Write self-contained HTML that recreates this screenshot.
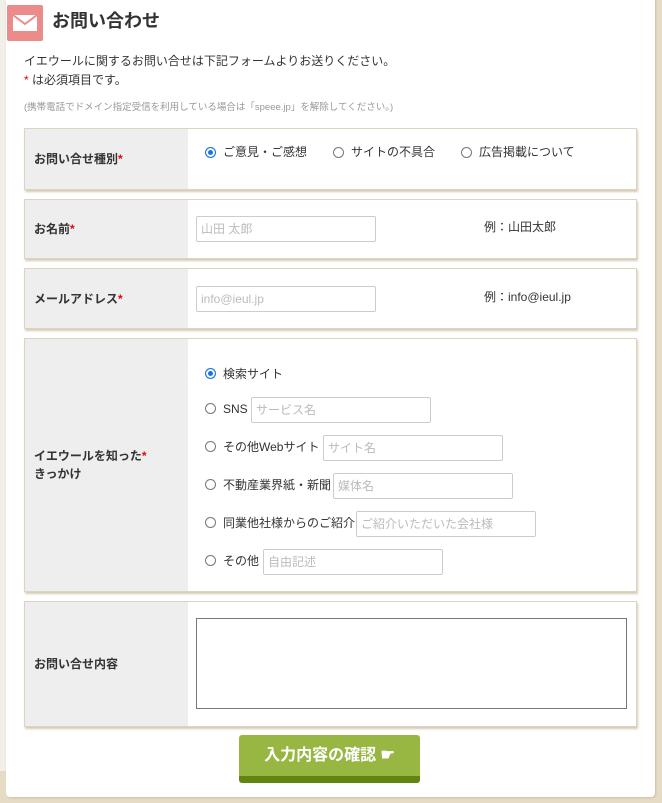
<!DOCTYPE html>
<html><head><meta charset="utf-8"><style>
*{box-sizing:border-box;margin:0;padding:0}
body{width:662px;height:803px;position:relative;overflow:hidden;background:#fff;font-family:"Liberation Sans","Noto Sans CJK JP",sans-serif;color:#333;font-size:12px}
.abs{position:absolute}
.bgb{left:0;top:771px;width:662px;height:32px;background:#e6dcc6}
.bgr{left:655px;top:0;width:7px;height:803px;background:#e6dcc6}
.bgl{left:0;top:0;width:6px;height:771px;background:#f2efe9}
.card{left:6px;top:-10px;width:649px;height:807px;background:#fff;border-radius:4px;box-shadow:1px 1px 2px #cbbfa8}
.row{position:absolute;left:24px;width:613px;background:#fff;border:1px solid #ddd3c2;box-shadow:1px 2px 2px #d6cbb6}
.lab{position:absolute;left:0;top:0;bottom:0;width:163px;background:#eee;font-weight:bold;font-size:12px;padding-left:9px;display:flex;align-items:center;line-height:18px}
.req{color:#e00}
.r{position:absolute;width:11px;height:11px;border:1px solid #777;border-radius:50%;background:#fff}
.r.on{border:1px solid #1a73e8;background:#1a73e8;box-shadow:inset 0 0 0 2px #fff}
.t{position:absolute;font-size:12px;white-space:nowrap;line-height:14px}
.in{position:absolute;height:26px;border:1px solid #ccc;border-radius:2px;color:#bbb;font-size:12px;line-height:14px;padding:5px 0 0 4px;white-space:nowrap}
</style></head><body>
<div class="abs bgb"></div><div class="abs bgr"></div><div class="abs bgl"></div>
<div class="abs card"></div>
<div class="abs" style="left:7px;top:5px;width:36px;height:36px;background:#ec8c8a;border-radius:2px">
<svg width="36" height="36" viewBox="0 0 36 36"><rect x="6" y="10" width="24" height="16" fill="#fff"/><path d="M6 10 L18 19 L30 10" fill="none" stroke="#ec8c8a" stroke-width="2"/></svg></div>
<div class="abs" style="left:52px;top:10px;font-size:18px;font-weight:bold;color:#333;line-height:22px">お問い合わせ</div>
<div class="abs" style="left:24px;top:54px;font-size:12px;line-height:15px">イエウールに関するお問い合せは下記フォームよりお送りください。</div>
<div class="abs" style="left:24px;top:73px;font-size:12px;line-height:15px"><span class="req">*</span> は必須項目です。</div>
<div class="abs" style="left:24px;top:102px;font-size:9.5px;color:#999;line-height:12px">(携帯電話でドメイン指定受信を利用している場合は「speee.jp」を解除してください。)</div>

<div class="row" style="top:128px;height:62px"><div class="lab"><div>お問い合せ種別<span class="req">*</span></div></div>
<div class="r on" style="left:180px;top:18px"></div><div class="t" style="left:198px;top:16px">ご意見・ご感想</div>
<div class="r" style="left:308px;top:18px"></div><div class="t" style="left:326px;top:16px">サイトの不具合</div>
<div class="r" style="left:436px;top:18px"></div><div class="t" style="left:454px;top:16px">広告掲載について</div></div>

<div class="row" style="top:199px;height:60px"><div class="lab"><div>お名前<span class="req">*</span></div></div>
<div class="in" style="left:171px;top:16px;width:180px">山田 太郎</div><div class="t" style="left:459px;top:20px">例：山田太郎</div></div>

<div class="row" style="top:268px;height:61px"><div class="lab"><div>メールアドレス<span class="req">*</span></div></div>
<div class="in" style="left:171px;top:17px;width:180px">info@ieul.jp</div><div class="t" style="left:459px;top:21px">例：info@ieul.jp</div></div>

<div class="row" style="top:338px;height:254px"><div class="lab"><div>イエウールを知った<span class="req">*</span><br>きっかけ</div></div>
<div class="r on" style="left:180px;top:29px"></div><div class="t" style="left:198px;top:28px">検索サイト</div>
<div class="r" style="left:180px;top:64px"></div><div class="t" style="left:198px;top:63px">SNS</div><div class="in" style="left:226px;top:58px;width:180px">サービス名</div>
<div class="r" style="left:180px;top:102px"></div><div class="t" style="left:198px;top:101px">その他Webサイト</div><div class="in" style="left:298px;top:96px;width:180px">サイト名</div>
<div class="r" style="left:180px;top:140px"></div><div class="t" style="left:198px;top:139px">不動産業界紙・新聞</div><div class="in" style="left:308px;top:134px;width:180px">媒体名</div>
<div class="r" style="left:180px;top:178px"></div><div class="t" style="left:198px;top:177px">同業他社様からのご紹介</div><div class="in" style="left:331px;top:172px;width:180px">ご紹介いただいた会社様</div>
<div class="r" style="left:180px;top:216px"></div><div class="t" style="left:198px;top:215px">その他</div><div class="in" style="left:238px;top:210px;width:180px">自由記述</div></div>

<div class="row" style="top:601px;height:126px"><div class="lab"><div>お問い合せ内容</div></div>
<div class="abs" style="left:171px;top:16px;width:431px;height:91px;border:1px solid #777"></div></div>

<div class="abs" style="left:239px;top:735px;width:181px;height:48px;background:#97b742;border-radius:3px;border-bottom:7px solid #628510;color:#fff;font-weight:bold;font-size:16px;text-align:center;line-height:42px">入力内容の確認 ☛</div>
</body></html>
